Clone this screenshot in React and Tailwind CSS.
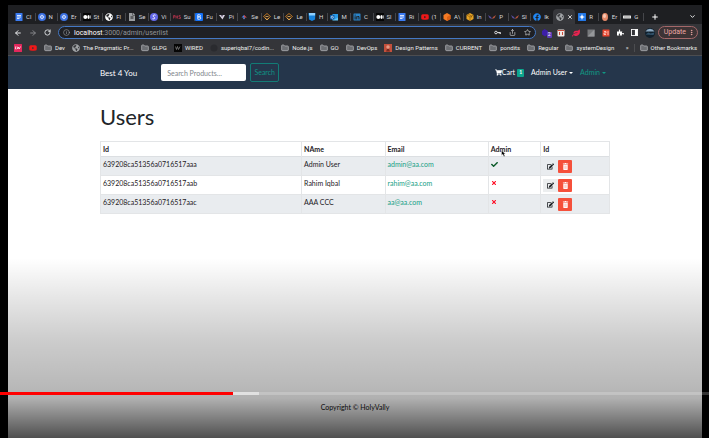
import {
  FaCheck, FaEdit, FaFacebook, FaFileAlt, FaGlobeAmericas, FaLinkedin, FaPuzzlePiece,
  FaShoppingCart, FaTimes, FaYoutube, FaLeaf,
} from 'react-icons/fa';
import { ArrowLeft, ArrowRight, ChevronDown, Folder, Info, Plus, RotateCw, Share, Star, X, EllipsisVertical } from 'lucide-react';

function Docs() {
  return (
    <svg viewBox="0 0 16 16" className="size-full">
      <rect x="1" width="14" height="16" rx="1" fill="#3b7bf0" />
      <path d="M4 5h8M4 8h8M4 11h5" stroke="#fff" strokeWidth="1.6" />
    </svg>
  );
}

function Helm() {
  return (
    <svg viewBox="0 0 16 16" className="size-full">
      <circle cx="8" cy="8" r="8" fill="#3a6fe0" />
      <circle cx="8" cy="8" r="3.2" fill="none" stroke="#e3ebff" strokeWidth="1.6" />
      <path d="M8 3v10M3 8h10" stroke="#c9d8ff" strokeWidth="1" />
    </svg>
  );
}

function Medium() {
  return (
    <svg viewBox="0 0 16 16" className="size-full">
      <rect width="16" height="16" fill="#050505" />
      <circle cx="4.6" cy="8" r="4" fill="#fff" />
      <ellipse cx="11" cy="8" rx="2.2" ry="4" fill="#fff" />
      <path d="M14.6 4.8v6.4" stroke="#fff" strokeWidth="1.4" />
    </svg>
  );
}

function Swirl() {
  return (
    <svg viewBox="0 0 16 16" className="size-full">
      <circle cx="8" cy="8" r="8" fill="#6367e8" />
      <path d="M11 4.500C8 2.500 4.500 5.500 7.500 7.700S10 12.500 5 11.500" stroke="#fff" strokeWidth="2" fill="none" />
    </svg>
  );
}

function RedMark() {
  return (
    <svg viewBox="0 0 16 16" className="size-full">
      <path d="M1 11V5h3v3H1M6 11V5m3 6V5M6 8h3M15 5h-3v3h3v3h-4" stroke="#b3344c" strokeWidth="1.500" fill="none" />
    </svg>
  );
}

function BlueB() {
  return (
    <svg viewBox="0 0 16 16" className="size-full">
      <rect width="16" height="16" rx="2" fill="#1671f5" />
      <path d="M5.500 3.500h3.200a2.100 2.100 0 0 1 0 4.300H5.500zm0 4.300h3.700a2.300 2.300 0 0 1 0 4.700H5.500z" stroke="#fff" strokeWidth="1.600" fill="none" />
    </svg>
  );
}

function Funnel() {
  return (
    <svg viewBox="0 0 16 16" className="size-full">
      <path d="M2 4h12L9 13z" fill="#d9d4e2" />
      <path d="M6 4h4l-2 4z" fill="#4e465c" />
    </svg>
  );
}

function Dots() {
  return (
    <svg viewBox="0 0 16 16" className="size-full">
      <path d="M3 9l5-5 2 4z" fill="#4a86e8" />
      <path d="M8 4l6 5H8z" fill="#d84b4b" />
      <path d="M5 9h6l-3 4z" fill="#6d8fd6" />
    </svg>
  );
}

function Diamond() {
  return (
    <svg viewBox="0 0 16 16" className="size-full">
      <path d="M8 1l7 6-7 6-7-6z" fill="none" stroke="#c87c24" strokeWidth="1.800" />
      <path d="M4 10l4 4 4-4M5 7h6" stroke="#f0b45a" strokeWidth="1.600" fill="none" />
    </svg>
  );
}

function Shield() {
  return (
    <svg viewBox="0 0 16 16" className="size-full">
      <path d="M1 0h14l-1 13-6 3-6-3z" fill="#1783dc" />
      <path d="M2 0h12v5H2z" fill="#8fd0ff" />
    </svg>
  );
}

function Outlook() {
  return (
    <svg viewBox="0 0 16 16" className="size-full">
      <path d="M5 2h11v12H5z" fill="#2a9be8" />
      <path d="M5 9l6 3 5-3v6H5z" fill="#60c5f7" />
      <rect y="4" width="9" height="9" rx="1" fill="#0a5cab" />
      <circle cx="4.500" cy="8.500" r="2.200" fill="none" stroke="#fff" strokeWidth="1.300" />
    </svg>
  );
}

function OrangeCube() {
  return (
    <svg viewBox="0 0 16 16" className="size-full">
      <path d="M8 0l7 4v8l-7 4-7-4V4z" fill="#f47a24" />
      <path d="M8 8l7-4v8l-7 4z" fill="#d95f14" />
    </svg>
  );
}

function YellowCube() {
  return (
    <svg viewBox="0 0 16 16" className="size-full">
      <path d="M8 0l7 4v8l-7 4-7-4V4z" fill="#e8a526" />
      <path d="M1 4l7 4 7-4M8 8v8M4 2l7 4v3" stroke="#7b4e09" strokeWidth="1.200" fill="none" />
    </svg>
  );
}

function Wings() {
  return (
    <svg viewBox="0 0 16 16" className="size-full">
      <path d="M0 4l6 4 2 4-5-2z" fill="#574f9e" />
      <path d="M16 4l-6 4-2 4 5-2z" fill="#b3543e" />
    </svg>
  );
}

function BluePlus() {
  return (
    <svg viewBox="0 0 16 16" className="size-full">
      <rect width="16" height="16" rx="1" fill="#2277e6" />
      <path d="M8 2l1.700 4.300L14 8l-4.300 1.700L8 14l-1.700-4.300L2 8l4.300-1.700z" fill="#fff" />
    </svg>
  );
}

function Peach() {
  return (
    <svg viewBox="0 0 16 16" className="size-full">
      <ellipse cx="8" cy="8" rx="6" ry="8" fill="#e58a6a" />
      <ellipse cx="7" cy="6" rx="3" ry="4" fill="#f7c9b4" />
    </svg>
  );
}

function Pill() {
  return (
    <svg viewBox="0 0 16 16" className="size-full">
      <rect y="5" width="16" height="6" rx="1" fill="#e4e4e4" />
      <path d="M3 8h2m2 0h2m2 0h2" stroke="#222" strokeWidth="1.400" />
    </svg>
  );
}

function KeyIcon() {
  return (
    <svg viewBox="0 0 16 16" className="size-[7px]">
      <circle cx="4.500" cy="8" r="3" fill="none" stroke="currentColor" strokeWidth="2" />
      <path d="M7.500 8H15v3.500M12 8v3" fill="none" stroke="currentColor" strokeWidth="2" />
    </svg>
  );
}

function TrashIcon() {
  return (
    <svg viewBox="0 0 14 16" className="size-[7px]">
      <path d="M1 1h4l1-1h2l1 1h4v2H1zM2 4h10v11a1 1 0 0 1-1 1H3a1 1 0 0 1-1-1z" fill="currentColor" />
      <path d="M5 6v8M7 6v8M9 6v8" stroke="#f5503b" strokeWidth="0.500" />
    </svg>
  );
}

const YouTube = () => <FaYoutube className="size-full text-[#f01818]" />;
const Globe = () => <FaGlobeAmericas className="size-full text-[#a0a3a6]" />;
const WhiteGlobe = () => <FaGlobeAmericas className="size-full text-white" />;
const Page = () => <FaFileAlt className="size-full text-[#9a9da0]" />;
const In = () => <FaLinkedin className="size-full text-[#2a84c8]" />;
const Fb = () => <FaFacebook className="size-full text-[#2087f5]" />;

const tabs = [
  [Docs, 'Cl'], [Helm, 'N'], [Helm, 'Er'], [Medium, 'St'], [WhiteGlobe, 'Fl'], [Page, 'Se'],
  [Swirl, 'Vi'], [RedMark, 'Su'], [BlueB, 'Fu'], [Funnel, 'Pi'], [Dots, 'Se'], [Diamond, 'Le'],
  [Diamond, 'Le'], [Shield, 'H'], [Outlook, 'M'], [In, 'C'], [Medium, 'Sl'], [Docs, 'Ri'],
  [YouTube, '(1'], [OrangeCube, 'A\\'], [YellowCube, 'In'], [Wings, 'P'], [Wings, 'Sl'],
  [Fb, 'Ik'], [Globe, null], [BluePlus, 'R'], [Peach, 'Er'], [Pill, 'G'],
];

function TabStrip() {
  return (
    <div className="flex h-[19px] items-end bg-[#1e1f22] pl-1 text-[6px] leading-[8px] text-[#d6d8dc]">
      {tabs.map(([Icon, label], i) => (
        <button
          key={i}
          aria-label={label || 'User list'}
          className={`flex h-[15px] min-w-0 flex-1 items-center gap-[3px] pl-[3px] whitespace-nowrap ${label ? '' : 'rounded-t bg-[#36373b]'}`}
        >
          <span className="size-[8px] shrink-0"><Icon /></span>
          {label ? (
            <>
              <span>{label}</span>
              <span className="-mr-px ml-auto h-[8px] w-px shrink-0 bg-[#45464a]" />
            </>
          ) : (
            <X className="size-[6px] shrink-0 text-white" strokeWidth={3} />
          )}
        </button>
      ))}
      <div className="flex h-[15px] w-[59px] shrink-0 items-center justify-between pr-[6px] pl-[8px] text-white">
        <button aria-label="New tab"><Plus className="size-[8px]" strokeWidth={3} /></button>
        <button aria-label="Search tabs"><ChevronDown className="size-[7px]" strokeWidth={3} /></button>
      </div>
    </div>
  );
}

function Toolbar() {
  return (
    <div className="flex h-[17px] items-center bg-[#343539] pr-[4px] pl-[6px] text-[7px] text-[#e6e7e9]">
      <div className="flex w-[44px] shrink-0 items-center gap-[7px]">
        <button aria-label="Back"><ArrowLeft className="size-[8px]" strokeWidth={3} /></button>
        <button aria-label="Forward" className="text-[#85868a]"><ArrowRight className="size-[8px]" strokeWidth={3} /></button>
        <button aria-label="Reload"><RotateCw className="size-[7px]" strokeWidth={3} /></button>
      </div>
      <label className="flex h-[13px] min-w-0 flex-1 items-center rounded-full border border-[#4478c4] bg-[#1f2024] px-[4px] leading-[10px]">
        <Info className="mr-[4px] size-[7px] shrink-0 text-[#a0a2a5]" />
        <span className="text-white">localhost</span>
        <input aria-label="Address" defaultValue=":3000/admin/userlist" className="min-w-0 flex-1 bg-transparent text-[#909296] outline-none" />
        <span className="flex items-center gap-[8px]">
          <KeyIcon />
          <Share className="size-[7px]" strokeWidth={2} />
          <Star className="size-[7px]" strokeWidth={2} />
        </span>
      </label>
      <div className="ml-[6px] flex shrink-0 items-center gap-[7px]">
        <span className="relative size-[8px]">
          <svg viewBox="0 0 16 16" className="size-full"><path d="M5 0l7 4v7l-6 4-6-4V4z" fill="#3d1fa8" /></svg>
          <span className="absolute top-[3px] left-[5px] flex h-[6px] w-[5px] items-center justify-center rounded-[1px] bg-[#5d3cb8] text-[5px] leading-none text-white">2</span>
        </span>
        <svg viewBox="0 0 16 16" className="size-[8px]"><rect x="1" y="1" width="14" height="14" rx="2" fill="#f1e9e5" /><path d="M1 3h14M5 6v6M11 6v6" stroke="#c94b3a" strokeWidth="2" /></svg>
        <FaLeaf className="size-[8px] text-[#ea2450]" />
        <svg viewBox="0 0 16 16" className="size-[8px]"><rect x="1" y="1" width="14" height="14" fill="#77797c" /><path d="M1 15L15 1v14z" fill="#96989b" /></svg>
        <svg viewBox="0 0 16 16" className="size-[8px]"><rect x="1" y="1" width="14" height="14" rx="1" fill="#e8452f" /><path d="M4 5h4v3H4v3h4M12 4v8" stroke="#ffd8d0" strokeWidth="1.600" fill="none" /></svg>
        <FaPuzzlePiece className="size-[7px] text-white" />
        <svg viewBox="0 0 16 16" className="size-[7px]"><rect x="1" y="1" width="14" height="14" fill="none" stroke="#fff" strokeWidth="2" /><path d="M9 1h6v14H9z" fill="#fff" /></svg>
        <svg viewBox="0 0 20 20" className="size-[10px]"><circle cx="10" cy="10" r="10" fill="#11202c" /><path d="M1 7a10 10 0 0 1 18 0z" fill="#8ca9c2" /><path d="M1 13l6-4 4 2 8-2-2 5z" fill="#32536c" /></svg>
      </div>
      <button className="ml-[3px] flex h-[13px] shrink-0 items-center gap-[2px] rounded-full border border-[#a4686a] bg-[#3d3335] pr-[2px] pl-[5px] text-[#eba9a5]">
        Update
        <EllipsisVertical className="size-[7px]" strokeWidth={3} />
      </button>
    </div>
  );
}

const FolderIcon = () => <Folder className="size-full text-[#a9abae]" fill="#6c6e72" strokeWidth={2.5} />;
const LwIcon = () => (
  <svg viewBox="0 0 16 16" className="size-full"><rect width="16" height="16" rx="1" fill="#e2285c" /><path d="M3 5v5h2M6 5l1.500 5L9 6l1.500 4L13 5" stroke="#fff" strokeWidth="1.400" fill="none" /></svg>
);
const WiredIcon = () => (
  <svg viewBox="0 0 16 16" className="size-full"><rect width="16" height="16" fill="#060606" /><path d="M3 5l2 6 2-6 2 6 3-6" stroke="#aaa" strokeWidth="1.100" fill="none" /></svg>
);
const DarkIcon = () => <svg viewBox="0 0 16 16" className="size-full"><circle cx="8" cy="8" r="7" fill="#2a2b2f" /></svg>;
const PatternIcon = () => (
  <svg viewBox="0 0 16 16" className="size-full"><rect width="16" height="16" fill="#c2503c" /><circle cx="8" cy="6" r="3.500" fill="#e59a84" /><path d="M4 15l2-5h4l2 5z" fill="#772a20" /></svg>
);

const bookmarks = [
  [LwIcon, ''], [YouTube, ''], [FolderIcon, 'Dev'], [Globe, 'The Pragmatic Pr...'], [FolderIcon, 'GLPG'],
  [WiredIcon, 'WIRED'], [DarkIcon, 'superiqbal7/codin...'], [FolderIcon, 'Node.js'], [FolderIcon, 'GO'],
  [FolderIcon, 'DevOps'], [PatternIcon, 'Design Patterns'], [FolderIcon, 'CURRENT'], [FolderIcon, 'pondits'],
  [FolderIcon, 'Regular'], [FolderIcon, 'systemDesign'],
];

function Bookmark({ icon: Icon, label, name }) {
  return (
    <a href="#" aria-label={name} className="flex shrink-0 items-center gap-[3px]">
      <span className="size-[8px]"><Icon /></span>
      {label && <span>{label}</span>}
    </a>
  );
}

function Bookmarks() {
  return (
    <div className="flex h-[15px] items-center justify-between border-b border-[#4c4d50] bg-[#343539] pr-[5px] pl-[6px] text-[6px] leading-[8px] whitespace-nowrap text-[#eceded]">
      <div className="flex items-center gap-[7px]">
        {bookmarks.map(([icon, label], i) => (
          <Bookmark key={i} icon={icon} label={label} name={label || 'Bookmark'} />
        ))}
      </div>
      <div className="flex items-center gap-[5px]">
        <span>»</span>
        <span className="h-[8px] w-px bg-[#4c4d50]" />
        <Bookmark icon={FolderIcon} label="Other Bookmarks" name="Other Bookmarks" />
      </div>
    </div>
  );
}

function Caret() {
  return <span className="h-0 w-0 border-x-[2px] border-t-[2px] border-x-transparent border-t-current" />;
}

function Navbar() {
  return (
    <nav className="bg-[#25364b] text-[7px] text-white">
      <div className="mx-[92px] flex h-[33px] items-center">
        <a href="#" className="mr-[24px] shrink-0 text-[8px]">Best 4 You</a>
        <input aria-label="Search products" placeholder="Search Products..." className="h-[17px] w-[85px] rounded-xs bg-white px-[6px] text-[#333] placeholder:text-[#80868c]" />
        <button className="ml-[4px] h-[19px] w-[29px] rounded-xs border border-[#127c76] text-[#0f9384]">Search</button>
        <div className="ml-auto flex items-center gap-[7px] pr-[4px] whitespace-nowrap">
          <a href="#" className="flex items-center">
            <FaShoppingCart className="size-[7px]" />
            Cart
            <span className="ml-[2px] flex h-[8px] w-[7px] items-center justify-center rounded-[1px] bg-[#0ca58d] text-[5px] font-bold">1</span>
          </a>
          <button className="flex items-center gap-[2px]">Admin User <Caret /></button>
          <button className="flex items-center gap-[2px] text-[#109883]">Admin <Caret /></button>
        </div>
      </div>
    </nav>
  );
}

const users = [
  { id: '639208ca51356a0716517aaa', name: 'Admin User', email: 'admin@aa.com', admin: true },
  { id: '639208ca51356a0716517aab', name: 'Rahim Iqbal', email: 'rahim@aa.com', admin: false },
  { id: '639208ca51356a0716517aac', name: 'AAA CCC', email: 'aa@aa.com', admin: false },
];

function UserTable() {
  return (
    <table className="w-full table-fixed border-collapse border border-[#e3e5e7] text-left leading-[10px] text-[#1d2024]">
      <colgroup>
        <col className="w-[39.5%]" />
        <col className="w-[16.4%]" />
        <col className="w-[20.3%]" />
        <col className="w-[10.3%]" />
        <col />
      </colgroup>
      <thead>
        <tr className="h-[15px] border-b border-[#dcdfe2]">
          {['Id', 'NAme', 'Email', 'Admin', 'Id'].map((h, i) => (
            <th key={i} className="border-x border-[#e3e5e7] px-[2px] font-bold">
              <span className="relative">
                {h}
                {h === 'Admin' && (
                  <svg viewBox="0 0 12 18" className="absolute top-[5px] left-[10px] h-[7px] w-[5px]">
                    <path d="M1 1v13l3-3 3 6 3-1-3-6h4z" fill="#000" stroke="#fff" />
                  </svg>
                )}
              </span>
            </th>
          ))}
        </tr>
      </thead>
      <tbody>
        {users.map((u) => (
          <tr key={u.id} className="group h-[19px] border-b border-[#e3e5e7] odd:bg-[#e9ecef]">
            <td className="border-x border-[#e3e5e7] px-[2px] pb-[4px]">{u.id}</td>
            <td className="border-x border-[#e3e5e7] px-[2px] pb-[4px]">{u.name}</td>
            <td className="border-x border-[#e3e5e7] px-[2px] pb-[4px]"><a href="#" className="text-[#16a085]">{u.email}</a></td>
            <td className="border-x border-[#e3e5e7] px-[2px] pb-[4px]">
              {u.admin ? <FaCheck className="size-[7px] text-[#0a5a28]" /> : <FaTimes className="size-[6px] text-[#ff0a22]" />}
            </td>
            <td className="border-x border-[#e3e5e7] px-[2px]">
              <div className="flex items-center">
                <button aria-label="Edit" className="flex h-[13px] w-[15px] items-center justify-center group-even:bg-[#eceeef]"><FaEdit className="size-[7px]" /></button>
                <button aria-label="Delete" className="flex h-[13px] w-[14px] items-center justify-center rounded-[1px] bg-[#f5503b] text-white"><TrashIcon /></button>
              </div>
            </td>
          </tr>
        ))}
      </tbody>
    </table>
  );
}

export default function App() {
  return (
    <div className="flex min-h-screen flex-col bg-white pb-[10px]">
      <div className="relative flex flex-1 flex-col bg-black pt-[5px] pr-[7px] pl-[8px]">
        <header className="font-[Roboto,sans-serif]">
          <TabStrip />
          <Toolbar />
          <Bookmarks />
        </header>
        <div className="flex flex-1 flex-col bg-white font-[Lato,sans-serif] text-[7px]">
          <Navbar />
          <main className="mx-[92px] flex-1 pt-[15px]">
            <h1 className="mb-[11px] text-[22px] leading-[26px] text-[#212529]">Users</h1>
            <UserTable />
          </main>
          <footer className="pb-[26px] text-center leading-[10px] text-[#111]">Copyright © HolyVally</footer>
        </div>
        <div className="pointer-events-none absolute inset-x-0 bottom-0 h-[180px] bg-[linear-gradient(to_bottom,transparent_0%,rgb(0_0_0/0.1)_23%,rgb(0_0_0/0.2)_46%,rgb(0_0_0/0.28)_72%,rgb(0_0_0/0.31)_78%,rgb(0_0_0/0.69)_100%)]" />
        <div role="progressbar" aria-label="Playback" aria-valuenow={33} className="absolute inset-x-0 bottom-[43px] flex h-[3px] bg-white/20">
          <div className="w-[32.8%] bg-[#ff0000]" />
          <div className="w-[3.7%] bg-white/50" />
        </div>
      </div>
    </div>
  );
}
